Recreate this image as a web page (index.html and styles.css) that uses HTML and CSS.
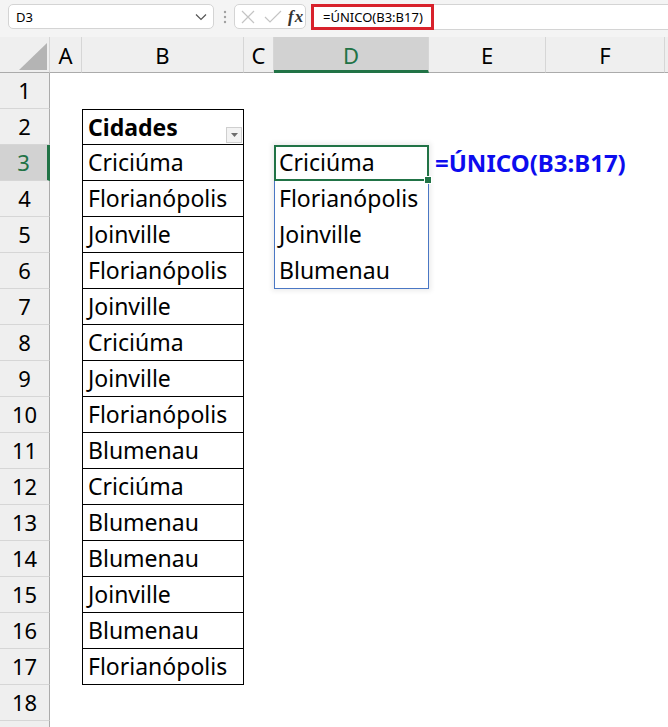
FILE: index.html
```html
<!DOCTYPE html>
<html lang="pt-BR">
<head>
    <meta charset="UTF-8">
    <meta name="viewport" content="width=device-width, initial-scale=1.0">
    <title>ÚNICO</title>
    <link rel="stylesheet" href="styles.css">
</head>
<body>
    <div class="formula-bar">
        <div class="name-box">
            <span>D3</span>
            <svg class="chevron" width="12" height="8" viewBox="0 0 12 8"><path d="M1 1.5 L6 6.5 L11 1.5" fill="none" stroke="#555" stroke-width="1.2"/></svg>
        </div>
        <svg class="grip" width="4" height="14" viewBox="0 0 4 14"><circle cx="2" cy="2" r="1.2"/><circle cx="2" cy="7" r="1.2"/><circle cx="2" cy="12" r="1.2"/></svg>
        <div class="fx-buttons">
            <svg width="16" height="16" viewBox="0 0 16 16"><path d="M2 2 L14 14 M14 2 L2 14" stroke="#c4c4c4" stroke-width="1.2"/></svg>
            <svg width="18" height="16" viewBox="0 0 18 16"><path d="M1 8 L6 13 L17 2" fill="none" stroke="#c4c4c4" stroke-width="1.2"/></svg>
            <span class="fx">f<i>x</i></span>
        </div>
        <div class="formula-input">
            <span class="formula-text">=ÚNICO(B3:B17)</span>
        </div>
    </div>

    <div class="sheet">
        <div class="corner"><svg width="50" height="36" viewBox="0 0 50 36"><polygon points="47,6 47,33 19,33" fill="#b4b4b4"/></svg></div>
        <div class="col-head">A</div>
        <div class="col-head">B</div>
        <div class="col-head">C</div>
        <div class="col-head selected">D</div>
        <div class="col-head">E</div>
        <div class="col-head">F</div>
        <div class="col-head"></div>

        <div class="row-head">1</div>
        <div class="cell"></div><div class="cell"></div><div class="cell"></div><div class="cell"></div><div class="cell"></div><div class="cell"></div><div class="cell"></div>

        <div class="row-head">2</div>
        <div class="cell"></div>
        <div class="cell tbl tbl-head">Cidades<span class="filter-btn"><svg width="7" height="4" viewBox="0 0 7 4"><polygon points="0,0 7,0 3.5,4" fill="#6d6d6d"/></svg></span></div>
        <div class="cell"></div><div class="cell"></div><div class="cell"></div><div class="cell"></div><div class="cell"></div>

        <div class="row-head selected">3</div>
        <div class="cell"></div>
        <div class="cell tbl">Criciúma</div>
        <div class="cell"></div>
        <div class="cell">Criciúma</div>
        <div class="cell formula-note">=ÚNICO(B3:B17)</div>
        <div class="cell"></div><div class="cell"></div>

        <div class="row-head">4</div>
        <div class="cell"></div>
        <div class="cell tbl">Florianópolis</div>
        <div class="cell"></div>
        <div class="cell">Florianópolis</div>
        <div class="cell"></div><div class="cell"></div><div class="cell"></div>

        <div class="row-head">5</div>
        <div class="cell"></div>
        <div class="cell tbl">Joinville</div>
        <div class="cell"></div>
        <div class="cell">Joinville</div>
        <div class="cell"></div><div class="cell"></div><div class="cell"></div>

        <div class="row-head">6</div>
        <div class="cell"></div>
        <div class="cell tbl">Florianópolis</div>
        <div class="cell"></div>
        <div class="cell">Blumenau</div>
        <div class="cell"></div><div class="cell"></div><div class="cell"></div>

        <div class="row-head">7</div>
        <div class="cell"></div><div class="cell tbl">Joinville</div><div class="cell"></div><div class="cell"></div><div class="cell"></div><div class="cell"></div><div class="cell"></div>

        <div class="row-head">8</div>
        <div class="cell"></div><div class="cell tbl">Criciúma</div><div class="cell"></div><div class="cell"></div><div class="cell"></div><div class="cell"></div><div class="cell"></div>

        <div class="row-head">9</div>
        <div class="cell"></div><div class="cell tbl">Joinville</div><div class="cell"></div><div class="cell"></div><div class="cell"></div><div class="cell"></div><div class="cell"></div>

        <div class="row-head">10</div>
        <div class="cell"></div><div class="cell tbl">Florianópolis</div><div class="cell"></div><div class="cell"></div><div class="cell"></div><div class="cell"></div><div class="cell"></div>

        <div class="row-head">11</div>
        <div class="cell"></div><div class="cell tbl">Blumenau</div><div class="cell"></div><div class="cell"></div><div class="cell"></div><div class="cell"></div><div class="cell"></div>

        <div class="row-head">12</div>
        <div class="cell"></div><div class="cell tbl">Criciúma</div><div class="cell"></div><div class="cell"></div><div class="cell"></div><div class="cell"></div><div class="cell"></div>

        <div class="row-head">13</div>
        <div class="cell"></div><div class="cell tbl">Blumenau</div><div class="cell"></div><div class="cell"></div><div class="cell"></div><div class="cell"></div><div class="cell"></div>

        <div class="row-head">14</div>
        <div class="cell"></div><div class="cell tbl">Blumenau</div><div class="cell"></div><div class="cell"></div><div class="cell"></div><div class="cell"></div><div class="cell"></div>

        <div class="row-head">15</div>
        <div class="cell"></div><div class="cell tbl">Joinville</div><div class="cell"></div><div class="cell"></div><div class="cell"></div><div class="cell"></div><div class="cell"></div>

        <div class="row-head">16</div>
        <div class="cell"></div><div class="cell tbl">Blumenau</div><div class="cell"></div><div class="cell"></div><div class="cell"></div><div class="cell"></div><div class="cell"></div>

        <div class="row-head">17</div>
        <div class="cell"></div><div class="cell tbl">Florianópolis</div><div class="cell"></div><div class="cell"></div><div class="cell"></div><div class="cell"></div><div class="cell"></div>

        <div class="row-head">18</div>
        <div class="cell"></div><div class="cell"></div><div class="cell"></div><div class="cell"></div><div class="cell"></div><div class="cell"></div><div class="cell"></div>

        <div class="row-head"></div>
        <div class="cell"></div><div class="cell"></div><div class="cell"></div><div class="cell"></div><div class="cell"></div><div class="cell"></div><div class="cell"></div>

        <!-- spill range D3:D6 and active cell D3, laid over the cells -->
        <div class="spill"></div>
        <div class="active"><span class="fill-handle"></span></div>
    </div>
</body>
</html>
```

FILE: styles.css
```css
* {
    box-sizing: border-box;
}
body {
    margin: 0;
    height: 727px;
    overflow: hidden;
    background: #fff;
    font-family: "Noto Sans", "Open Sans", sans-serif;
    color: #000;
}

/* formula bar */
.formula-bar {
    display: flex;
    align-items: center;
    height: 37px;
    padding-bottom: 4px;
    background: #f4f4f4;
}
.name-box {
    display: flex;
    align-items: center;
    justify-content: space-between;
    width: 206px;
    height: 25px;
    margin-left: 8px;
    padding: 0 6px 0 7px;
    background: #fff;
    border: 1px solid #d4d4d4;
    border-radius: 5px;
    font-size: 13px;
}
.grip {
    margin: 0 7px 0 9px;
    fill: #a0a0a0;
}
.fx-buttons {
    display: flex;
    align-items: center;
    gap: 8px;
    width: 72px;
    height: 25px;
    padding-left: 5px;
    background: #fff;
    border: 1px solid #d4d4d4;
    border-radius: 5px;
}
.fx {
    font-family: "Liberation Serif", "DejaVu Serif", serif;
    font-style: italic;
    font-weight: bold;
    font-size: 17px;
    margin-left: -2px;
    letter-spacing: 1px;
    color: #333;
}
.formula-input {
    flex: 1;
    height: 26px;
    margin-left: 5px;
    background: #fff;
    border-top: 1px solid #d4d4d4;
    border-bottom: 1px solid #d4d4d4;
}
.formula-text {
    display: inline-block;
    width: 123px;
    height: 26px;
    margin-top: -1px;
    padding-left: 9px;
    border: 3px solid #d8222c;
    font-size: 13px;
    line-height: 20px;
}

/* grid */
.sheet {
    position: relative;
    display: grid;
    grid-template-columns: 50px 32px 162px 30px 155px 117px 119px 1fr;
    grid-template-rows: repeat(20, 36px);
}
.corner {
    background: #efefef;
    border-right: 1px solid #d6d6d6;
    border-bottom: 1px solid #ababab;
}
.corner svg {
    display: block;
}
.col-head {
    background: #efefef;
    border-right: 1px solid #d6d6d6;
    border-bottom: 1px solid #ababab;
    font-size: 22px;
    line-height: 36px;
    text-align: center;
}
.col-head.selected {
    background: #d2d2d2;
    border-bottom: 3px solid #217346;
    color: #217346;
}
.row-head {
    background: #efefef;
    border-right: 1px solid #ababab;
    border-bottom: 1px solid #d6d6d6;
    font-size: 22px;
    line-height: 35px;
    text-align: center;
}
.row-head.selected {
    background: #d2d2d2;
    border-right: 3px solid #217346;
    color: #217346;
}
.cell {
    position: relative;
    padding-left: 5px;
    font-size: 23px;
    line-height: 35px;
    white-space: nowrap;
}
.tbl {
    border-left: 1px solid #000;
    border-right: 1px solid #000;
    border-bottom: 1px solid #000;
}
.tbl-head {
    border-top: 1px solid #000;
    font-weight: bold;
    line-height: 34px;
}
.filter-btn {
    position: absolute;
    right: 1px;
    bottom: 1px;
    display: flex;
    align-items: center;
    justify-content: center;
    width: 16px;
    height: 16px;
    background: #f3f3f3;
    border: 1px solid #cfcfcf;
}
.filter-btn svg {
    display: block;
}
.formula-note {
    overflow: visible;
    padding-left: 6px;
    font-size: 24px;
    color: #0c0cee;
    font-weight: bold;
}

/* selection overlays */
.spill,
.active {
    position: absolute;
    inset: 0;
    grid-column: 5 / 6;
    pointer-events: none;
}
.spill {
    grid-row: 4 / 8;
    border: 1px solid #4a77c4;
    box-shadow: 0 0 5px 2px rgba(0, 0, 0, 0.08);
}
.active {
    grid-row: 4 / 5;
    border: 2px solid #217346;
}
.fill-handle {
    position: absolute;
    right: -5px;
    bottom: -5px;
    width: 8px;
    height: 8px;
    background: #217346;
    border: 1px solid #fff;
}
```
